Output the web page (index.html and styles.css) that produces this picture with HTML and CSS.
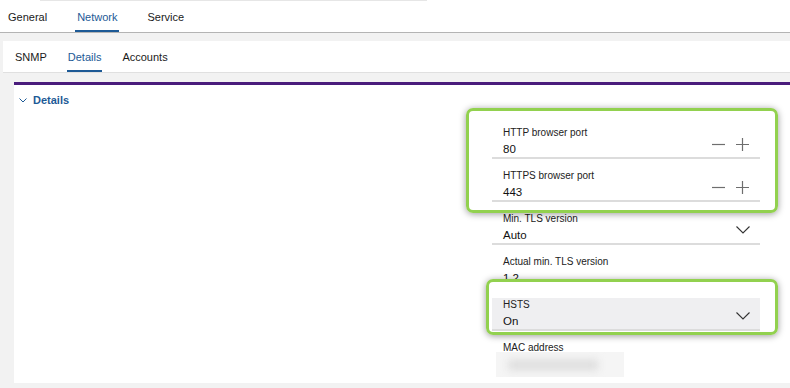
FILE: index.html
```html
<!DOCTYPE html>
<html lang="en">
<head>
    <meta charset="UTF-8">
    <meta name="viewport" content="width=device-width, initial-scale=1.0">
    <title>Network - Details</title>
    <link rel="stylesheet" href="styles.css">
</head>
<body>
<header class="topnav">
    <div class="topline"></div>
    <nav class="tabs">
        <a>General</a><a class="active">Network</a><a>Service</a>
    </nav>
</header>
<main class="page">
    <nav class="subtabs">
        <a>SNMP</a><a class="active">Details</a><a>Accounts</a>
    </nav>
    <section class="panel">
        <h2 class="panel-title">
            <svg class="caret" width="8" height="5" viewBox="0 0 8 5"><path d="M0.5 0.5 L4 4 L7.5 0.5" fill="none" stroke="#1d5a96" stroke-width="1"/></svg>
            Details
        </h2>
        <div class="form">
            <div class="group">
                <div class="field">
                    <div class="info">
                        <div class="label">HTTP browser port</div>
                        <div class="value">80</div>
                    </div>
                    <div class="controls">
                        <svg width="14" height="14" viewBox="0 0 14 14"><path d="M0 7.5 H13" stroke="#6e6e6e" stroke-width="1.2"/></svg>
                        <svg width="14" height="14" viewBox="0 0 14 14"><path d="M0 7.5 H13 M6.5 1 V14" stroke="#6e6e6e" stroke-width="1.2"/></svg>
                    </div>
                </div>
                <div class="field">
                    <div class="info">
                        <div class="label">HTTPS browser port</div>
                        <div class="value">443</div>
                    </div>
                    <div class="controls">
                        <svg width="14" height="14" viewBox="0 0 14 14"><path d="M0 7.5 H13" stroke="#6e6e6e" stroke-width="1.2"/></svg>
                        <svg width="14" height="14" viewBox="0 0 14 14"><path d="M0 7.5 H13 M6.5 1 V14" stroke="#6e6e6e" stroke-width="1.2"/></svg>
                    </div>
                </div>
            </div>
            <div class="field">
                <div class="info">
                    <div class="label">Min. TLS version</div>
                    <div class="value">Auto</div>
                </div>
                <div class="controls">
                    <svg width="14" height="8" viewBox="0 0 14 8"><path d="M0.5 0.5 L7 7 L13.5 0.5" fill="none" stroke="#333" stroke-width="1.1"/></svg>
                </div>
            </div>
            <div class="field readonly">
                <div class="info">
                    <div class="label">Actual min. TLS version</div>
                    <div class="value">1.2</div>
                </div>
            </div>
            <div class="group small">
                <div class="field selected">
                    <div class="info">
                        <div class="label">HSTS</div>
                        <div class="value">On</div>
                    </div>
                    <div class="controls">
                        <svg width="14" height="8" viewBox="0 0 14 8"><path d="M0.5 0.5 L7 7 L13.5 0.5" fill="none" stroke="#333" stroke-width="1.1"/></svg>
                    </div>
                </div>
            </div>
            <div class="field readonly">
                <div class="info">
                    <div class="label">MAC address</div>
                    <div class="blurred"><span></span></div>
                </div>
            </div>
        </div>
    </section>
</main>
</body>
</html>
```
FILE: styles.css
```css
body {
    margin: 0;
    font-family: "Liberation Sans", Arial, sans-serif;
    color: #1a1a1a;
    background: #f2f2f2;
}
a {
    cursor: pointer;
}
.topnav {
    height: 32px;
    background: #fff;
    border-bottom: 1px solid #b4b4b4;
}
.topline {
    width: 387px;
    height: 1px;
    margin-left: 40px;
    background: #e6e6e6;
}
.tabs {
    display: flex;
    gap: 26px;
    padding-left: 6px;
    height: 31px;
}
.tabs a,
.subtabs a {
    box-sizing: border-box;
    height: 31px;
    padding: 9px 2px 0;
    font-size: 11px;
    line-height: 14px;
    border-bottom: 2px solid transparent;
    color: #1a1a1a;
}
.tabs .active,
.subtabs .active {
    color: #1d5a96;
    border-bottom-color: #1d5a96;
}
.page {
    height: 355px;
    box-sizing: border-box;
    padding: 8px 0 5px 3px;
    background: #f2f2f2;
    display: flex;
    flex-direction: column;
}
.subtabs {
    display: flex;
    gap: 19px;
    height: 31px;
    padding-left: 11px;
    background: #fff;
    box-shadow: 0 1px 0 #e0e0e0;
}
.subtabs a {
    padding: 9px 1px 0;
}
.panel {
    flex: 1;
    margin: 10px 0 0 11px;
    border-top: 3px solid #4a1c7c;
    background: #fff;
    overflow: hidden;
}
.panel-title {
    display: flex;
    align-items: center;
    gap: 6px;
    margin: 0;
    padding: 7px 0 0 5px;
    font-size: 11px;
    line-height: 16px;
    font-weight: bold;
    color: #1d5a96;
}
.caret {
    margin-top: 1px;
}
.form {
    width: 268px;
    margin: 0 30px 0 auto;
    padding-top: 8px;
}
.group {
    position: relative;
    display: flow-root;
}
.group::after {
    content: "";
    position: absolute;
    top: -8px;
    bottom: -11px;
    left: -26px;
    right: -18px;
    border: 3px solid #92d14f;
    border-radius: 7px;
    box-shadow: 0 1px 7px rgba(0, 0, 0, .4);
    pointer-events: none;
}
.group.small::after {
    top: -9px;
    bottom: -4px;
    left: -6px;
}
.field {
    display: flex;
    align-items: center;
    margin-top: 10px;
    padding-left: 11px;
    border-bottom: 2px solid #dcdcdc;
}
.field.readonly {
    border-bottom-color: transparent;
}
.field.selected {
    background: #efeff1;
}
.info {
    flex: 1;
}
.label {
    font-size: 10px;
    line-height: 13px;
    color: #222;
}
.value {
    margin-top: 2px;
    font-size: 11.5px;
    line-height: 16px;
    color: #111;
}
.controls {
    display: flex;
    gap: 10px;
    padding: 5px 10px 0 0;
}
.controls svg {
    display: block;
}
.blurred {
    width: 128px;
    height: 25px;
    margin: -2px 0 0 -7px;
    background: #f5f5f5;
    overflow: hidden;
}
.blurred span {
    display: block;
    width: 90px;
    height: 10px;
    margin: 8px 0 0 12px;
    background: #dcdcdc;
    filter: blur(4px);
}
```
